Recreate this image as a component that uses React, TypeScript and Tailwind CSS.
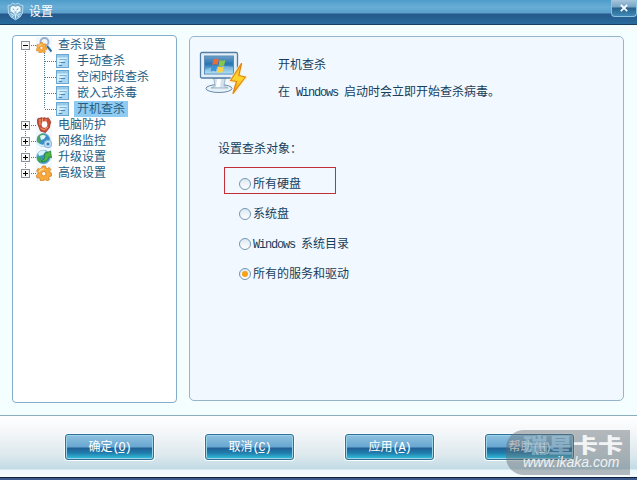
import { useState } from 'react';

const SANS = "font-['Liberation_Sans','Noto_Sans_CJK_SC',sans-serif]";
const MONO = "font-['Liberation_Mono','Noto_Sans_CJK_SC',monospace] text-[12px] tracking-[-1.2px]";

type IconName = 'search' | 'glove' | 'network' | 'update' | 'gear';

const CHILDREN = ['手动查杀', '空闲时段查杀', '嵌入式杀毒', '开机查杀'];

const BRANCHES: { label: string; icon: IconName }[] = [
   { label: '电脑防护', icon: 'glove' },
   { label: '网络监控', icon: 'network' },
   { label: '升级设置', icon: 'update' },
   { label: '高级设置', icon: 'gear' },
];

const BUTTONS = [
   { label: '确定', hotkey: 'O' },
   { label: '取消', hotkey: 'C' },
   { label: '应用', hotkey: 'A' },
   { label: '帮助', hotkey: 'H' },
];

function ShieldIcon() {
   return (
      <svg width="17" height="19" viewBox="0 0 17 19">
         <path d="M1 3.500 3.500 3 5.500 1.200 8.500 2.200 11.500 1.200 13.500 3 16 3.500 15.500 11 13 15 8.500 17.800 4 15 1.500 11Z" fill="#6fa9cd" stroke="#b7d9eb" />
         <path d="M3.500 5.500 6 3.800 8.500 4.800 11 3.800 13.500 5.500 13.500 10 12 9.500 10.500 11.500H6.500L5 9.500 3.500 10Z" fill="#eef8fc" />
         <path d="M3.500 11.500 6.500 13.200 8.500 12.500 10.500 13.200 13.500 11.500M8.500 13V16.500M6 15.200 5 13.500M11 15.200 12 13.500" stroke="#dceef7" fill="none" />
         <path d="M5.800 6.800 7.300 7.800M11.200 6.800 9.700 7.800M7.500 10H9.500" stroke="#4d8db8" />
      </svg>
   );
}

function GearShape() {
   return (
      <>
         <path
            d="M6.500 1h3l.4 2 1.500.6L13.200 2.500l1.600 2-1.200 1.600.4 1.500 1.800.7-.3 2.700-2 .4-.8 1.300.7 1.900-2.200 1.300-1.500-1.300-1.600.2-1.100 1.700-2.600-.6-.2-2-1.200-1.100-2 .2L.3 10.400l1.600-1.300.1-1.600L.6 6l1.300-2.300 2 .4 1.500-.9Z"
            fill="#f7a93b"
            stroke="#d87a1c"
            strokeWidth=".8"
         />
         <path d="M3 7Q4 4 8 4" stroke="#ffdc8c" strokeWidth="1.300" fill="none" />
         <circle cx="7.800" cy="8.700" r="2.200" fill="#fffaf0" stroke="#d87a1c" strokeWidth=".8" />
      </>
   );
}

function TreeIcon({ name }: { name: IconName }) {
   return (
      <svg width="16" height="16" viewBox="0 0 16 16" className="shrink-0">
         <rect width="16" height="16" fill="#f1f8fe" />
         {name === 'search' && (
            <>
               <path d="M11 9 15.500 14.500" stroke="#2d6fa0" strokeWidth="2" />
               <circle cx="8.500" cy="5" r="4" fill="#eef6fd" stroke="#96aecb" strokeWidth="1.900" />
               <g transform="translate(0 4.800) scale(.7)">
                  <GearShape />
               </g>
            </>
         )}
         {name === 'glove' && (
            <>
               <path d="M1.500 2.500Q2 .5 4 1.500Q5 0 7 1.200Q9 0 10 1.500Q13 0 13.500 3Q15.500 4 14 7.500Q14 11 11.500 13L9.500 15.500 4.500 14 3 10Q1 7 1.500 2.500Z" fill="#c95036" stroke="#98321f" strokeWidth=".8" />
               <path d="M4 2V8M6.500 1.500V5M10 2V5M4.500 11 8 13 12 10" stroke="#f0a079" fill="none" />
               <ellipse cx="8.500" cy="7.500" rx="2.800" ry="3.200" fill="#fff" />
            </>
         )}
         {name === 'network' && (
            <>
               <circle cx="7.500" cy="7" r="6.500" fill="#3a8fc9" stroke="#77b1dc" />
               <path d="M2 3Q5 0 9 1L7 4 4 5 5 9 2 10Q0 6 2 3Z" fill="#4aa55c" />
               <path d="M4 3Q7 1 10 3L8 6 5 7Z" fill="#e1f5fb" />
               <path d="M1 10Q5 14 9 12" stroke="#d5eff9" strokeWidth="2" fill="none" />
               <circle cx="12" cy="11" r="3.800" fill="#c4e1f4" stroke="#85b4d8" />
               <circle cx="12" cy="11" r="1.600" fill="#3b82b9" />
            </>
         )}
         {name === 'update' && (
            <>
               <circle cx="7.500" cy="8" r="6.700" fill="#3895c8" stroke="#72aed3" />
               <path d="M2 4Q5 0 10 2L7 6 3 7Z" fill="#d9f1f7" />
               <path d="M1 8 4 7 6 12 4 14Q1 12 1 8Z" fill="#3fa754" />
               <path d="M5 12.500Q9 11 9 6L8 5 14.500 2 15.500 9 13.200 7.500Q11 14 5 12.500Z" fill="#53b548" stroke="#258039" strokeWidth=".8" />
            </>
         )}
         {name === 'gear' && <GearShape />}
      </svg>
   );
}

function PageIcon() {
   return (
      <svg width="14" height="14" viewBox="0 0 14 14" className="shrink-0">
         <rect x=".5" y=".5" width="12" height="13" fill="#d9eefb" stroke="#6aa6d0" />
         <path d="M1 1H12V3.500H1Z" fill="#93c9eb" />
         <path d="M1 13 12 3.500V13Z" fill="#a9d6f2" />
         <path d="M3.500 5.500H10.500M3 8.500H9M2.500 11.500H6.500" stroke="#7db3d9" />
         <path d="M5 8.500H9M3 11.500H6" stroke="#4687b9" />
      </svg>
   );
}

// Dotted guide and the +/- box left of a top level entry
function RootConnector({ open, last }: { open?: boolean; last?: boolean }) {
   return (
      <svg width="23" height="16" viewBox="0 0 23 16" className="shrink-0">
         <path
            d={open ? 'M12.500 8V16' : last ? 'M12.500 0V8' : 'M12.500 0V16'}
            stroke="#4c7898"
            strokeDasharray="1 1"
         />
         <path d="M18 8.500H23" stroke="#4c7898" strokeDasharray="1 1" />
         <rect x="8.500" y="4.500" width="8" height="8" fill="#f6f6f4" stroke="#8994a0" />
         <path d={open ? 'M10 8.500H15' : 'M10 8.500H15M12.500 6V11'} stroke="#000" />
      </svg>
   );
}

function ChildConnector({ last }: { last: boolean }) {
   return (
      <svg width="43" height="16" viewBox="0 0 43 16" className="shrink-0">
         <path
            d={`M12.500 0V16M31.500 0V${last ? 8 : 16}M32 8.500H43`}
            stroke="#4c7898"
            strokeDasharray="1 1"
            fill="none"
         />
      </svg>
   );
}

function SettingsTree() {
   return (
      <div className="mt-2.5 h-[368px] w-[165px] shrink-0 rounded-[4px] border border-[#83adc9] bg-white pt-px text-[#245d83]">
         <div className="flex h-4 items-center">
            <RootConnector open />
            <TreeIcon name="search" />
            <span className="ml-1.5">查杀设置</span>
         </div>
         {CHILDREN.map((label, i) => (
            <div key={label} className="flex h-4 items-center">
               <ChildConnector last={i === CHILDREN.length - 1} />
               <PageIcon />
               <span className={`ml-1 h-4 px-[3px] ${label === '开机查杀' ? 'bg-[#8fcaf0]' : ''}`}>
                  {label}
               </span>
            </div>
         ))}
         {BRANCHES.map((branch, i) => (
            <div key={branch.label} className="flex h-4 items-center">
               <RootConnector last={i === BRANCHES.length - 1} />
               <TreeIcon name={branch.icon} />
               <span className="ml-1.5">{branch.label}</span>
            </div>
         ))}
      </div>
   );
}

function MonitorIcon() {
   return (
      <svg width="48" height="46" viewBox="0 0 48 46" className="shrink-0">
         <defs>
            <linearGradient id="screen" x2="0" y2="1">
               <stop stopColor="#6f9fc6" />
               <stop offset=".45" stopColor="#2674b4" />
               <stop offset="1" stopColor="#a5dbf1" />
            </linearGradient>
            <linearGradient id="bolt" x2="0" y2="1">
               <stop stopColor="#ffb624" />
               <stop offset=".5" stopColor="#ffd62b" />
               <stop offset="1" stopColor="#f39816" />
            </linearGradient>
         </defs>
         <ellipse cx="20" cy="38.500" rx="13" ry="4" fill="#e7f1f8" stroke="#6c8daa" />
         <path d="M14.500 28H26.500L25 35Q25 37 29 38H12Q16 37 16 35Z" fill="#d3e1ee" stroke="#8da9c1" strokeWidth=".8" />
         <path d="M18 29H22L21 37H17Z" fill="#fff" />
         <rect x="1.500" y="2.500" width="37" height="25.500" rx="1.500" fill="#e2eff8" stroke="#537da2" strokeWidth="1.300" />
         <rect x="5.500" y="6" width="29" height="18" fill="url(#screen)" stroke="#5b8db7" />
         <path d="M6 20Q18 14 34 17V23.500H6Z" fill="#c7eef9" opacity=".35" />
         <path d="M14.500 9.500Q17 8 19.800 9.500L18.500 15Q16 13.500 13.200 15Z" fill="#ed6935" />
         <path d="M20.800 10Q23.500 11.500 26.500 10L25.200 15.500Q22 17 19.500 15.500Z" fill="#87c54b" />
         <path d="M12.900 16Q15.500 14.500 18.200 16L16.900 21.500Q14.500 20 11.700 21.500Z" fill="#3e91d6" />
         <path d="M19.200 16.500Q22 18 24.900 16.500L23.500 22Q20.700 23.500 17.900 22Z" fill="#ffd345" />
         <path d="M42.500 13.500 31.500 31 37.500 31.800 34.500 43.500 46.500 27.500 39.800 25.500Z" fill="#fff" stroke="#f8eed0" strokeWidth="3" />
         <path d="M42.500 13.500 31.500 30.500 37.500 31.500 34 43.500 46.500 27 39.800 25.500Z" fill="url(#bolt)" stroke="#e18512" strokeWidth="1.200" strokeLinejoin="round" />
      </svg>
   );
}

function ScanTargets() {
   const [selected, setSelected] = useState('services');
   const options = [
      { id: 'disks', label: <>所有硬盘</> },
      { id: 'system', label: <>系统盘</> },
      { id: 'windows', label: <><span className={MONO}>Windows </span>系统目录</> },
      { id: 'services', label: <>所有的服务和驱动</> },
   ];

   return (
      <div className="mt-2.5 ml-[34px] flex w-[112px] flex-col gap-[3px]">
         {options.map(({ id, label }) => (
            <button
               key={id}
               onClick={() => setSelected(id)}
               className={`flex h-[27px] items-center border pt-[7px] pl-3.5 ${
                  id === 'disks' ? 'border-[#c42f35]' : 'border-transparent'
               }`}
            >
               <span className="flex size-3 shrink-0 items-center justify-center rounded-full border border-[#7396b1] bg-linear-to-b from-[#dce8f2] to-white">
                  {selected === id && <span className="size-1.5 rounded-full bg-[#f7a11b]" />}
               </span>
               <span className="ml-0.5 leading-4 whitespace-nowrap">{label}</span>
            </button>
         ))}
      </div>
   );
}

export default function App() {
   return (
      <div lang="zh-CN" className={`relative flex h-[480px] w-[637px] flex-col overflow-hidden bg-[#f4feff] text-xs text-[#173e5b] ${SANS}`}>
         <header className="flex h-[25px] shrink-0 items-start justify-between border-b border-[#163f60] bg-[linear-gradient(#4e9cca_0px,#67add5_7px,#5ba0cc_13px,#25588a_14px,#286c9d_24px)] pl-[7px]">
            <div className="flex items-center pt-px text-white">
               <ShieldIcon />
               <span className="ml-[5px] pt-px leading-5">设置</span>
            </div>
            <button
               aria-label="关闭"
               className="flex h-[17px] w-[26px] items-center justify-center rounded-b-[4px] border border-t-0 border-[#8bc3e3] bg-[linear-gradient(#a6c6dc_0px,#76a5c5_7px,#28618d_8px,#408bb6_16px)]"
            >
               <svg width="8" height="8" viewBox="0 0 8 8">
                  <path d="M.8.8 7.200 7.200M7.200.8.8 7.200" stroke="#fff" strokeWidth="1.700" />
               </svg>
            </button>
         </header>

         <main className="flex h-[390px] shrink-0 gap-3 pl-3 leading-4">
            <SettingsTree />
            <section className="mt-[11px] h-[365px] w-[435px] rounded-[5px] border border-[#96b5ca] bg-[#f1f8ff]">
               <div className="flex pt-[13px] pl-[9px]">
                  <MonitorIcon />
                  <div className="ml-[31px] flex flex-col gap-[11px] pt-[7px]">
                     <h1>开机查杀</h1>
                     <p className="whitespace-nowrap">
                        在<span className={MONO}> Windows </span>启动时会立即开始查杀病毒。
                     </p>
                  </div>
               </div>
               <h2 className="mt-10 ml-7">设置查杀对象：</h2>
               <ScanTargets />
            </section>
         </main>

         <footer className="flex h-[62px] shrink-0 items-start gap-[51px] border-t border-[#8caebb] bg-[linear-gradient(#ffffff_0px,#f4f7f9_16px,#dce8ed_40px,#c1dbe5_53px,#edf8fb_54px,#f5fdff_61px)] pt-[18px] pl-[65px]">
            {BUTTONS.map(({ label, hotkey }) => (
               <button
                  key={hotkey}
                  className="flex h-[26px] w-[89px] items-center justify-center rounded-[3px] border border-[#326f98] bg-[linear-gradient(#90c2e0_0px,#68a6d1_12px,#216094_13px,#207eae_18px,#35c5df_24px)] text-white shadow-[inset_0_0_0_1px_#9bd3e9,0_0_0_1px_#fafdff]"
               >
                  <span className="leading-4 whitespace-pre">
                     {label}
                     <span className={MONO}>(<u className="underline-offset-1">{hotkey}</u>)</span>
                  </span>
               </button>
            ))}
         </footer>
         <div className="h-[3px] border-t border-[#101f3c] bg-[#3c598c]" />

         {/* Site stamp laid over the button bar */}
         <div className="pointer-events-none absolute top-[430px] left-[506px] flex h-[45px] w-[124px] flex-col rounded-l-[18px] bg-[#616b70]/45 pl-[17px] whitespace-nowrap text-white/85">
            <span className="mt-[7px] origin-top scale-y-80 text-[25px] leading-[22px] font-black">
               <span className="text-[#a9cfe3]/55">瑞星</span>卡卡
            </span>
            <span className="-mt-[3px] text-[14px] leading-[13px] italic">www.ikaka.com</span>
         </div>
      </div>
   );
}
